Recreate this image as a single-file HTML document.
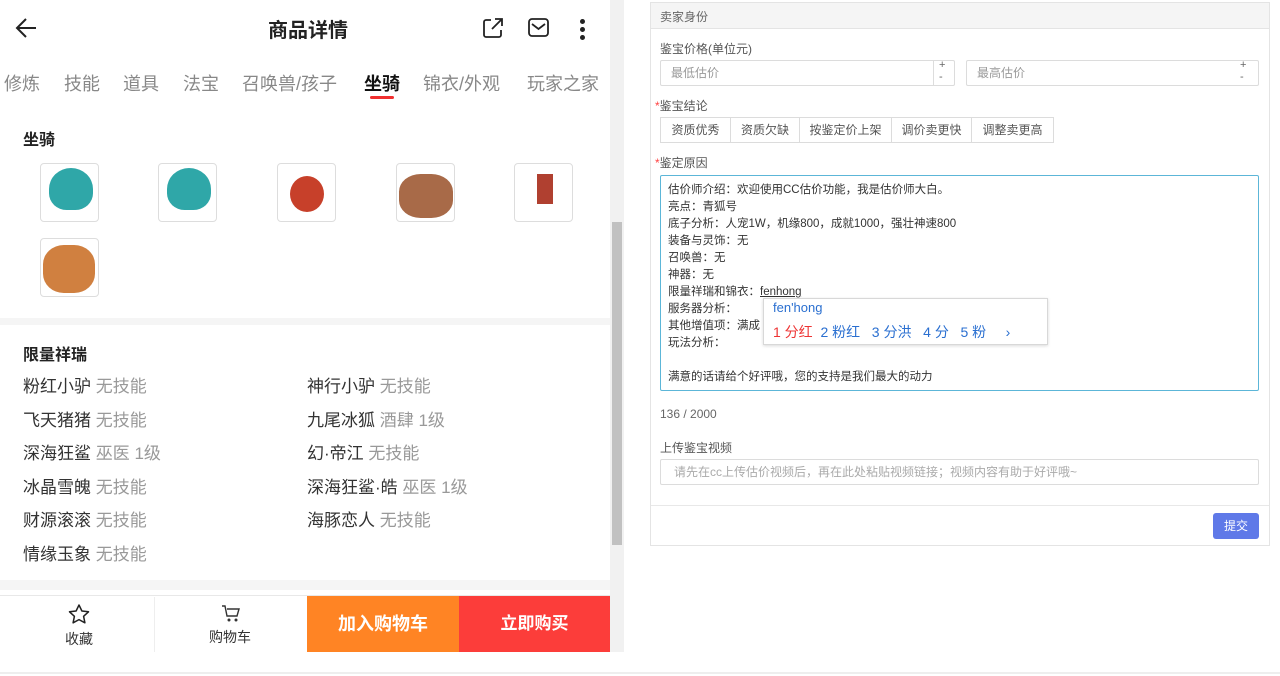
<!DOCTYPE html>
<html><head><meta charset="utf-8"><style>
*{box-sizing:border-box;margin:0;padding:0}
body{width:1280px;height:676px;background:#fff;font-family:"Liberation Sans","Noto Sans CJK SC",sans-serif;position:relative;overflow:hidden;color:#333}
.a{position:absolute}
.tab{position:absolute;top:70px;font-size:18px;color:#888}
.img{position:absolute;width:59px;height:59px;border:1px solid #ddd;border-radius:4px;background:#fff;overflow:hidden}
.row{position:absolute;font-size:17px;color:#333}
.row span{color:#999}
.rl{position:absolute;font-size:12px;color:#555}
.inp{position:absolute;border:1px solid #dcdcdc;border-radius:2px;font-size:12px;color:#999;padding-left:16px;line-height:24px;background:#fff}
.btn{position:absolute;top:117px;height:26px;border:1px solid #dcdcdc;font-size:12px;color:#555;line-height:24px;text-align:center;background:#fff}
.ta{position:absolute;font-size:11.5px;color:#333;left:668px}
</style></head><body>
<svg class="a" style="left:14px;top:16px" width="26" height="24" viewBox="0 0 26 24"><path d="M22 12H4M12 3 3 12l9 9" fill="none" stroke="#222" stroke-width="2"/></svg>
<div class="a" style="left:268px;top:14px;font-size:20px;font-weight:bold;color:#222">商品详情</div>
<svg class="a" style="left:482px;top:17px" width="22" height="22" viewBox="0 0 22 22"><path d="M9 3H4a2 2 0 0 0-2 2v13a2 2 0 0 0 2 2h13a2 2 0 0 0 2-2v-5M10 12 19 3M13 2h7v7" fill="none" stroke="#222" stroke-width="1.8"/></svg>
<svg class="a" style="left:527px;top:17px" width="24" height="22" viewBox="0 0 24 22"><rect x="2" y="2" width="19" height="17" rx="3" fill="none" stroke="#222" stroke-width="1.8"/><path d="M5 7l6.5 5L18 7" fill="none" stroke="#222" stroke-width="1.8"/></svg>
<div class="a" style="left:580px;top:19px;width:5px;height:5px;border-radius:50%;background:#222;box-shadow:0 8px 0 #222,0 16px 0 #222"></div>
<div class="tab" style="left:4px">修炼</div>
<div class="tab" style="left:64px">技能</div>
<div class="tab" style="left:123px">道具</div>
<div class="tab" style="left:183px">法宝</div>
<div class="tab" style="left:242px">召唤兽/孩子</div>
<div class="tab" style="left:364px;color:#111;font-weight:bold">坐骑</div>
<div class="a" style="left:370px;top:96px;width:24px;height:3px;border-radius:2px;background:#f03030"></div>
<div class="tab" style="left:423px">锦衣/外观</div>
<div class="tab" style="left:527px">玩家之家</div>
<div class="a" style="left:23px;top:126px;font-size:16px;font-weight:bold;color:#222">坐骑</div>
<div class="img" style="left:40px;top:163px"><div class="a" style="left:8px;top:4px;width:44px;height:42px;border-radius:50% 50% 40% 40%;background:#2fa7a8"></div></div>
<div class="img" style="left:158px;top:163px"><div class="a" style="left:8px;top:4px;width:44px;height:42px;border-radius:50% 50% 40% 40%;background:#2fa7a8"></div></div>
<div class="img" style="left:277px;top:163px"><div class="a" style="left:12px;top:12px;width:34px;height:36px;border-radius:50%;background:#c7402a"></div></div>
<div class="img" style="left:396px;top:163px"><div class="a" style="left:2px;top:10px;width:54px;height:44px;border-radius:40%;background:#a86a48"></div></div>
<div class="img" style="left:514px;top:163px"><div class="a" style="left:22px;top:10px;width:16px;height:30px;background:#b04030"></div></div>
<div class="img" style="left:40px;top:238px"><div class="a" style="left:2px;top:6px;width:52px;height:48px;border-radius:40%;background:#d08040"></div></div>
<div class="a" style="left:0;top:318px;width:610px;height:7px;background:#f5f5f5"></div>
<div class="a" style="left:23px;top:341px;font-size:16px;font-weight:bold;color:#222">限量祥瑞</div>
<div class="row" style="left:23px;top:372px">粉红小驴 <span>无技能</span></div>
<div class="row" style="left:307px;top:372px">神行小驴 <span>无技能</span></div>
<div class="row" style="left:23px;top:406px">飞天猪猪 <span>无技能</span></div>
<div class="row" style="left:307px;top:406px">九尾冰狐 <span>酒肆 1级</span></div>
<div class="row" style="left:23px;top:439px">深海狂鲨 <span>巫医 1级</span></div>
<div class="row" style="left:307px;top:439px">幻·帝江 <span>无技能</span></div>
<div class="row" style="left:23px;top:473px">冰晶雪魄 <span>无技能</span></div>
<div class="row" style="left:307px;top:473px">深海狂鲨·皓 <span>巫医 1级</span></div>
<div class="row" style="left:23px;top:506px">财源滚滚 <span>无技能</span></div>
<div class="row" style="left:307px;top:506px">海豚恋人 <span>无技能</span></div>
<div class="row" style="left:23px;top:540px">情缘玉象 <span>无技能</span></div>
<div class="a" style="left:0;top:580px;width:610px;height:10px;background:#f5f5f5"></div>
<div class="a" style="left:0;top:595px;width:610px;height:1px;background:#e8e8e8"></div>
<svg class="a" style="left:67px;top:603px" width="24" height="22" viewBox="0 0 24 22"><path d="M12 2l2.9 6 6.6.8-4.9 4.5 1.3 6.5L12 16.6 6.1 19.8l1.3-6.5L2.5 8.8 9.1 8z" fill="none" stroke="#222" stroke-width="1.5" stroke-linejoin="round"/></svg>
<div class="a" style="left:65px;top:629px;font-size:14px;color:#333">收藏</div>
<div class="a" style="left:154px;top:597px;width:1px;height:55px;background:#eee"></div>
<svg class="a" style="left:220px;top:604px" width="22" height="20" viewBox="0 0 22 20"><path d="M2 2h3l2 10h10l2-7H7" fill="none" stroke="#333" stroke-width="1.4"/><circle cx="9" cy="16" r="1.5" fill="#333"/><circle cx="16" cy="16" r="1.5" fill="#333"/></svg>
<div class="a" style="left:209px;top:627px;font-size:14px;color:#333">购物车</div>
<div class="a" style="left:307px;top:596px;width:152px;height:56px;background:#ff8424;color:#fff;font-size:18px;font-weight:bold;text-align:center;line-height:56px">加入购物车</div>
<div class="a" style="left:459px;top:596px;width:151px;height:56px;background:#fc3d3a;color:#fff;font-size:17px;font-weight:bold;text-align:center;line-height:56px">立即购买</div>
<div class="a" style="left:610px;top:0;width:14px;height:652px;background:#f1f1f1"></div>
<div class="a" style="left:612px;top:222px;width:10px;height:323px;background:#c1c1c1"></div>
<div class="a" style="left:0;top:672px;width:1280px;height:2px;background:#eee"></div>
<div class="a" style="left:650px;top:2px;width:620px;height:544px;border:1px solid #e4e4e4;background:#fff"></div>
<div class="a" style="left:651px;top:3px;width:618px;height:26px;background:#f5f5f5;border-bottom:1px solid #e4e4e4"></div>
<div class="a" style="left:660px;top:8px;font-size:12px;color:#666">卖家身份</div>
<div class="rl" style="left:660px;top:40px">鉴宝价格(单位元)</div>
<div class="inp" style="left:660px;top:60px;width:295px;height:26px;padding-left:10px">最低估价</div>
<div class="a" style="left:933px;top:61px;width:1px;height:24px;background:#ddd"></div>
<div class="a" style="left:939px;top:59px;font-size:11px;color:#666;line-height:12px">+<br>-</div>
<div class="inp" style="left:966px;top:60px;width:293px;height:26px;padding-left:10px">最高估价</div>
<div class="a" style="left:1240px;top:59px;font-size:11px;color:#666;line-height:12px">+<br>-</div>
<div class="rl" style="left:655px;top:97px"><span style="color:#f44">*</span>鉴宝结论</div>
<div class="btn" style="left:660px;width:71px">资质优秀</div>
<div class="btn" style="left:730px;width:70px">资质欠缺</div>
<div class="btn" style="left:799px;width:93px">按鉴定价上架</div>
<div class="btn" style="left:891px;width:81px">调价卖更快</div>
<div class="btn" style="left:971px;width:83px">调整卖更高</div>
<div class="rl" style="left:655px;top:154px"><span style="color:#f44">*</span>鉴定原因</div>
<div class="a" style="left:660px;top:175px;width:599px;height:216px;border:1px solid #5cb6d8;border-radius:2px"></div>
<div class="ta" style="top:181px">估价师介绍：欢迎使用CC估价功能，我是估价师大白。</div>
<div class="ta" style="top:198px">亮点：青狐号</div>
<div class="ta" style="top:215px">底子分析：人宠1W，机缘800，成就1000，强壮神速800</div>
<div class="ta" style="top:232px">装备与灵饰：无</div>
<div class="ta" style="top:249px">召唤兽：无</div>
<div class="ta" style="top:266px">神器：无</div>
<div class="ta" style="top:283px">限量祥瑞和锦衣：<u>fenhong</u></div>
<div class="ta" style="top:300px">服务器分析：</div>
<div class="ta" style="top:317px">其他增值项：满成</div>
<div class="ta" style="top:334px">玩法分析：</div>
<div class="ta" style="top:368px">满意的话请给个好评哦，您的支持是我们最大的动力</div>
<div class="a" style="left:763px;top:298px;width:285px;height:47px;background:#fff;border:1px solid #d8d8d8;box-shadow:0 1px 3px rgba(0,0,0,.15)"></div>
<div class="a" style="left:773px;top:300px;font-size:13px;color:#2a6fd0">fen'hong</div>
<div class="a" style="left:773px;top:322px;font-size:14px;color:#2a6fd0;white-space:nowrap"><span style="color:#e33">1 分红</span>&nbsp;&nbsp;2 粉红&nbsp;&nbsp;&nbsp;3 分洪&nbsp;&nbsp;&nbsp;4 分&nbsp;&nbsp;&nbsp;5 粉&nbsp;&nbsp;&nbsp;&nbsp;&nbsp;›</div>
<div class="rl" style="left:660px;top:407px;color:#666">136 / 2000</div>
<div class="rl" style="left:660px;top:439px">上传鉴宝视频</div>
<div class="inp" style="left:660px;top:459px;width:599px;height:26px;padding-left:13px;color:#aaa">请先在cc上传估价视频后，再在此处粘贴视频链接；视频内容有助于好评哦~</div>
<div class="a" style="left:651px;top:505px;width:618px;height:1px;background:#e8e8e8"></div>
<div class="a" style="left:1213px;top:513px;width:46px;height:26px;background:#5f79e8;border-radius:3px;color:#fff;font-size:12px;text-align:center;line-height:26px">提交</div>
</body></html>
